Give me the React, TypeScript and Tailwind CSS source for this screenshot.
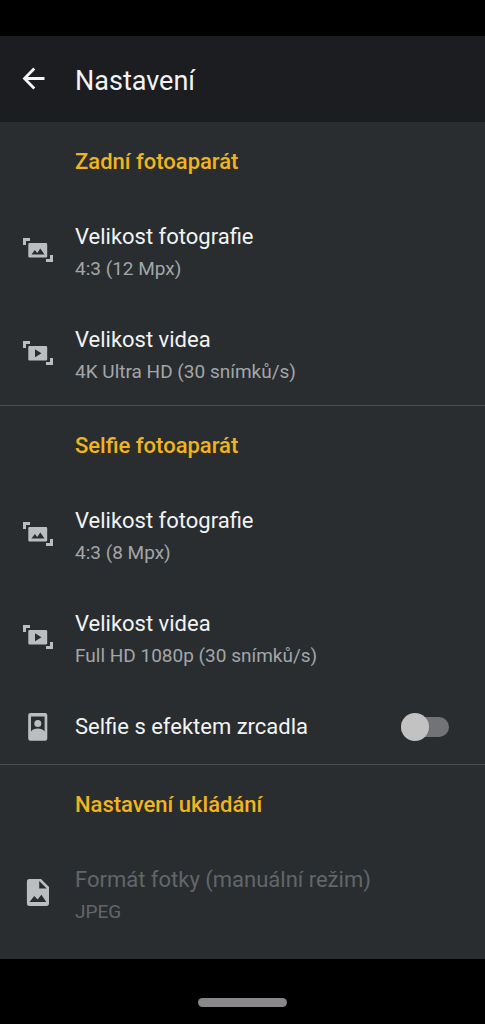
import type { ReactNode } from 'react';

function ArrowBackIcon() {
  return (
    <svg viewBox="0 0 24 24" className="h-6 w-6" fill="none" stroke="#f4f5f7" strokeWidth="2.8" aria-hidden="true">
      <path d="M22.500 11.500H3M12.300 1.500L2.500 11.500l9.800 10" />
    </svg>
  );
}

function PhotoSizeIcon() {
  return (
    <svg viewBox="0 0 32 32" className="h-8 w-8 shrink-0" fill="#bbbec1" aria-hidden="true">
      <path d="M1 2h7v3H4v4H1zM31 26h-7v-3h4v-4h3z" />
      <path
        fillRule="evenodd"
        d="M7.500 7h16.500a1.200 1.200 0 0 1 1.200 1.200v12a1.200 1.200 0 0 1-1.200 1.200H7.500a1.200 1.200 0 0 1-1.200-1.200V8.200A1.200 1.200 0 0 1 7.500 7zM9.500 18.500h13l-4.200-6-3 4.500-2.500-3z"
      />
    </svg>
  );
}

function VideoSizeIcon() {
  return (
    <svg viewBox="0 0 32 32" className="h-8 w-8 shrink-0" fill="#bbbec1" aria-hidden="true">
      <path d="M1 2h7v3H4v4H1zM31 26h-7v-3h4v-4h3z" />
      <path
        fillRule="evenodd"
        d="M7.500 7h16.500a1.200 1.200 0 0 1 1.200 1.200v12a1.200 1.200 0 0 1-1.200 1.200H7.500a1.200 1.200 0 0 1-1.200-1.200V8.200A1.200 1.200 0 0 1 7.500 7zM13 10.200v8l6.500-4z"
      />
    </svg>
  );
}

function SelfieIcon() {
  return (
    <svg viewBox="0 0 32 32" className="h-8 w-8 shrink-0" fill="#bbbec1" aria-hidden="true">
      <path
        fillRule="evenodd"
        d="M8.500 2h14.500a2.300 2.300 0 0 1 2.300 2.300v23.200a2.300 2.300 0 0 1-2.300 2.300H8.500a2.300 2.300 0 0 1-2.300-2.300V4.300A2.300 2.300 0 0 1 8.500 2zM9 5.500v15c1.500-2 4-2.900 6.800-2.900s5.300.9 6.800 2.900v-15z"
      />
      <circle cx="15.800" cy="12.500" r="3.500" />
    </svg>
  );
}

function FileImageIcon() {
  return (
    <svg viewBox="0 0 32 32" className="h-8 w-8 shrink-0" fill="#bbbec1" aria-hidden="true">
      <path
        fillRule="evenodd"
        d="M7.500 0h11.500l8 8v16.300a2.600 2.600 0 0 1-2.600 2.600H7.500a2.600 2.600 0 0 1-2.600-2.600V2.600A2.600 2.600 0 0 1 7.500 0zM17.200 2v7.500h7.500zM7.500 23h16.800l-4.900-7.200-3.800 4.800-3.300-3.600z"
      />
    </svg>
  );
}

function Section({ title, children }: { title: string; children: ReactNode }) {
  return (
    <section className="border-b border-[#4b4e52] last:border-b-0">
      <h2 className="pt-6 pr-4 pb-[21px] pl-[75px] text-[22px] leading-8 font-medium text-[#f2b41c]">{title}</h2>
      {children}
    </section>
  );
}

function SettingRow({
  icon,
  title,
  value,
  disabled = false,
}: {
  icon: ReactNode;
  title: string;
  value: string;
  disabled?: boolean;
}) {
  return (
    <button
      type="button"
      disabled={disabled}
      className="flex w-full items-center gap-[21px] px-[22px] pt-[22px] pb-[19px] text-left text-[#f1f3f4] disabled:text-[#636669]"
    >
      {icon}
      <span className="flex flex-col gap-0.5">
        <span className="text-[22px] leading-8">{title}</span>
        <span className={disabled ? 'text-[19px] leading-7 text-[#636669]' : 'text-[19px] leading-7 text-[#a3a6a8]'}>
          {value}
        </span>
      </span>
    </button>
  );
}

export default function App() {
  return (
    <div className="flex min-h-screen flex-col bg-black font-['Roboto',sans-serif]">
      <header className="mt-9 flex h-[86px] items-center gap-[29px] bg-[#1c1d21] pl-[22px]">
        <button type="button" aria-label="Zpět">
          <ArrowBackIcon />
        </button>
        <h1 className="pt-1 text-[27px] text-[#f1f3f4]">Nastavení</h1>
      </header>

      <main className="flex-1 bg-[#292d30]">
        <Section title="Zadní fotoaparát">
          <SettingRow icon={<PhotoSizeIcon />} title="Velikost fotografie" value="4:3 (12 Mpx)" />
          <SettingRow icon={<VideoSizeIcon />} title="Velikost videa" value="4K Ultra HD (30 snímků/s)" />
        </Section>

        <Section title="Selfie fotoaparát">
          <SettingRow icon={<PhotoSizeIcon />} title="Velikost fotografie" value="4:3 (8 Mpx)" />
          <SettingRow icon={<VideoSizeIcon />} title="Velikost videa" value="Full HD 1080p (30 snímků/s)" />
          <label className="flex h-[75px] items-center gap-[21px] pr-9 pl-[22px]">
            <SelfieIcon />
            <span className="flex-1 text-[22px] leading-8 text-[#f1f3f4]">Selfie s efektem zrcadla</span>
            <input
              type="checkbox"
              role="switch"
              className="flex h-5 w-12 appearance-none items-center rounded-full bg-[#717377] before:block before:h-7 before:w-7 before:shrink-0 before:rounded-full before:bg-[#c2c2c2] checked:justify-end"
            />
          </label>
        </Section>

        <Section title="Nastavení ukládání">
          <SettingRow icon={<FileImageIcon />} title="Formát fotky (manuální režim)" value="JPEG" disabled />
        </Section>
      </main>

      <footer className="flex h-[65px] items-end justify-center pb-[17px]">
        <div className="h-[9px] w-[89px] rounded-full bg-[#89878a]" />
      </footer>
    </div>
  );
}
